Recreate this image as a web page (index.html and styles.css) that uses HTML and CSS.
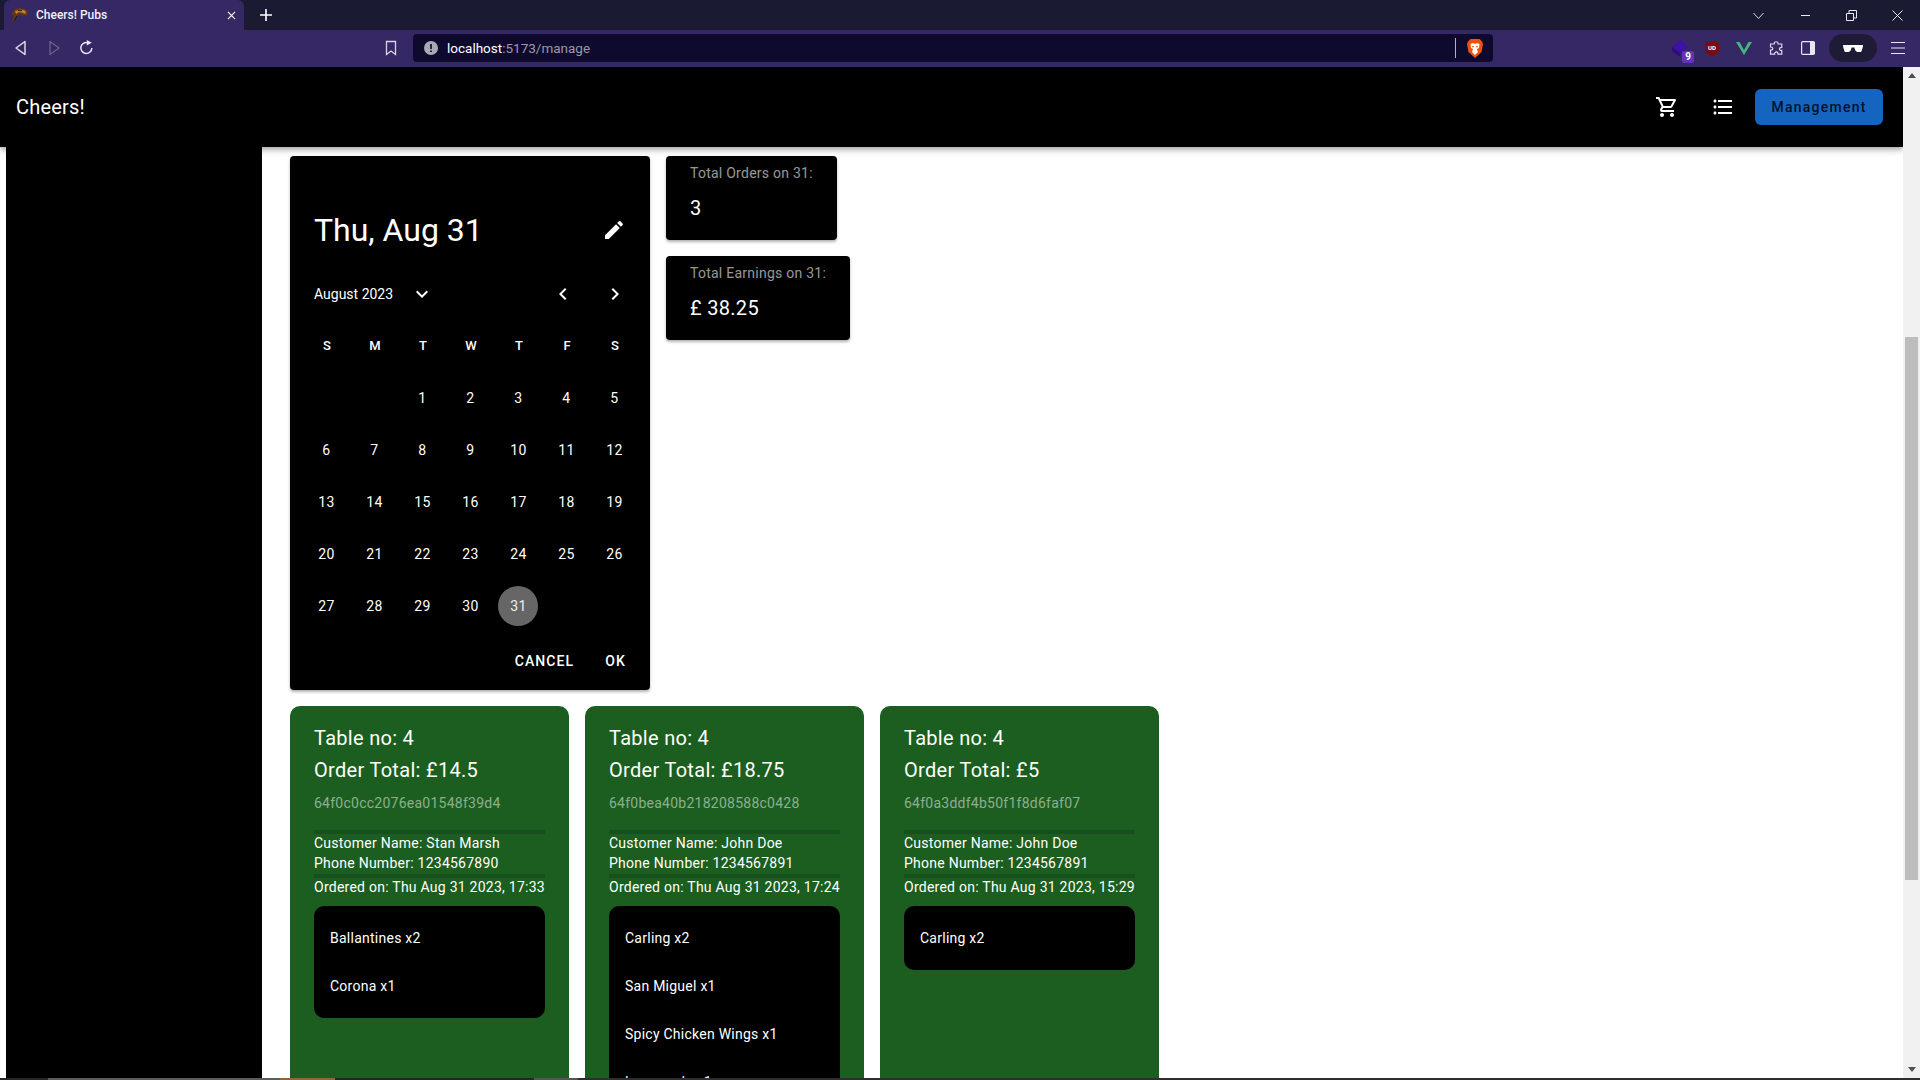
FILE: index.html
```html
<!DOCTYPE html>
<html lang="en">
<head>
<meta charset="utf-8">
<title>Cheers! Pubs</title>
<link rel="stylesheet" href="styles.css">
</head>
<body>
<div class="tabstrip">
  <div class="tab">
    <svg class="favicon" viewBox="0 0 16 14"><path d="M0 5 3 1l5-1 5 1 3 2-1 5-3-1-2 1-2-2-3 2-2 4-2 2-1-1 2-5-2-1z" fill="#5e3a14"/><path d="M3 3 8 1.500l4 .5 2 2-1 2-3-1.500L7 4 4 6z" fill="#c6802a"/><path d="M6 2.500h4M2 13l3-5" stroke="#2c1a08" stroke-width="1.200"/></svg>
    <span class="tab-title">Cheers! Pubs</span>
    <svg class="tab-close" viewBox="0 0 10 10"><path d="M1 1l8 8M9 1 1 9" stroke="#fff" stroke-width="1.300"/></svg>
  </div>
  <svg class="tab-plus" viewBox="0 0 12 12"><path d="M6 0v12M0 6h12" stroke="#fff" stroke-width="1.600"/></svg>
  <div class="winctl">
    <span class="winslot"><svg class="ic-11" viewBox="0 0 11 11"><path d="M.5 3 5.500 8.500 10.500 3" fill="none" stroke="#d8d8e0"/></svg></span>
    <span class="winslot"><svg class="ic-11" viewBox="0 0 11 11"><path d="M1 5.500h9" stroke="#e8e8f0" stroke-width="1"/></svg></span>
    <span class="winslot"><svg class="ic-11" viewBox="0 0 11 11"><path d="M.5 3.500h7v7h-7zM3 3.500V.5h7.500v7.500H8" fill="none" stroke="#e8e8f0"/></svg></span>
    <span class="winslot"><svg class="ic-11" viewBox="0 0 11 11"><path d="M.5.5l10 10M10.500.5l-10 10" stroke="#e8e8f0"/></svg></span>
  </div>
</div>
<div class="toolbar">
  <span class="navslot first"><svg class="ic-16" viewBox="0 0 16 16"><path d="M12 1.500v13L3 8z" fill="none" stroke="#e4e2ee" stroke-width="1.400" stroke-linejoin="round"/></svg></span>
  <span class="navslot"><svg class="ic-16" viewBox="0 0 16 16"><path d="M4 1.500v13L13 8z" fill="none" stroke="#6a5f90" stroke-width="1.400" stroke-linejoin="round"/></svg></span>
  <span class="navslot"><svg class="ic-16" viewBox="0.700 0 16 16"><path d="M13.500 8A5.500 5.500 0 1 1 9.500 2.700" fill="none" stroke="#e8e6f2" stroke-width="1.500"/><path d="M8.500 0v5.500l5-2.700z" fill="#e8e6f2"/></svg></span>
  <span class="navslot bookmark"><svg class="ic-16" viewBox="0 0 16 16"><path d="M3.500 1.500h9v13L8 11l-4.500 3.500z" fill="none" stroke="#d8d6e4" stroke-width="1.300"/></svg></span>
  <div class="address">
    <svg class="info" viewBox="0 0 14 14"><circle cx="7" cy="7" r="7" fill="#a9a8b4"/><path d="M7 3v5M7 9.500v1.600" stroke="#0e0a2e" stroke-width="1.700"/></svg>
    <span class="url"><span class="url-host">localhost</span>:5173/manage</span>
    <i class="addr-sep"></i>
    <svg class="lion" viewBox="0 0 16 19"><path d="M3.500 0h9L15 2.500 16 5l-1.500 8L8 19 1.500 13 0 5l1-2.500z" fill="#f1500f"/><path d="M3.500 5 6 4l2 1 2-1 2.500 1L12 9l-2 1 1 3-3 3-3-3 1-3-2-1z" fill="#fff"/><path d="M5 7h2L6 9zM11 7H9l1 2z" fill="#f1500f"/></svg>
  </div>
  <span class="extslot first-ext"><svg class="ext-gem" viewBox="0 0 16 17"><path d="M8.500 0 16 6.500 8.500 13 1 6.500z" fill="#3f10a8"/><path d="M0 7v4l8.500 6v-3.500z" fill="#2d0b80"/></svg><b class="badge">9</b></span>
  <span class="extslot"><svg class="ext-shield" viewBox="0 0 14 15"><path d="M7 0l7 2v7c0 3-4 5-7 6-3-1-7-3-7-6V2z" fill="#7a0b0e"/></svg><b class="ublock">UD</b></span>
  <span class="extslot"><svg class="ext-vue" viewBox="0 0 16 13"><path d="M0 0h3.500L8 8l4.500-8H16L8 13z" fill="#41b883"/></svg></span>
  <span class="extslot"><svg class="ext-puzzle" viewBox="0 0 20 20"><path d="M7 2.500c0-2 5-2 5 0 0 1 0 1.500 0 1.500h5v4.500c-2 0-3 .5-3 2s1 2.500 3 2v5h-5c0-2-1-3-2-3s-3 1-2.500 3H2v-5.500c2 .5 3-.5 3-2s-1-2-3-2V4h5z" fill="none" stroke="#dcdae6" stroke-width="1.600"/></svg></span>
  <span class="extslot"><svg class="ext-panel" viewBox="0 0 14 14"><rect x=".6" y=".6" width="12.800" height="12.800" rx="1.200" fill="none" stroke="#e8e6f2" stroke-width="1.200"/><rect x="9" y="1" width="5" height="12" fill="#e8e6f2"/></svg></span>
  <span class="pill"><svg class="glasses" viewBox="0 0 22 10"><path d="M0 1h22v2l-1.500 5c-.5 1.500-6 1.500-7-1l-1-3h-3l-1 3c-1 2.500-6.500 2.500-7 1L0 3z" fill="#fff"/></svg></span>
  <span class="menuslot"><svg class="ic-16" viewBox="0 0 16 16"><path d="M1 2.500h14M1 8h14M1 13.500h14" stroke="#e8e6f2" stroke-width="1.200"/></svg></span>
</div>
<div class="viewport">
  <div class="page">
    <header class="appbar">
      <div class="brand">Cheers!</div>
      <div class="appbar-actions">
        <svg class="ic-24 cart" viewBox="0 0 24 24"><path fill="#fff" d="M15.550 13c.75 0 1.410-.41 1.750-1.030l3.580-6.490c.37-.66-.11-1.480-.87-1.480H5.210l-.94-2H1v2h2l3.600 7.590-1.350 2.440C4.520 15.370 5.480 17 7 17h12v-2H7l1.100-2h7.450zM6.160 6h12.150l-2.760 5H8.530L6.160 6zM7 18c-1.100 0-1.990.9-1.990 2S5.900 22 7 22s2-.9 2-2-.9-2-2-2zm10 0c-1.100 0-1.990.9-1.990 2s.89 2 1.990 2 2-.9 2-2-.9-2-2-2z"/></svg>
        <svg class="ic-24 list" viewBox="0 0 24 24"><path fill="#fff" d="M4 10.500c-.83 0-1.500.67-1.500 1.500s.67 1.500 1.500 1.500 1.500-.67 1.500-1.500-.67-1.500-1.500-1.500zm0-6c-.83 0-1.500.67-1.500 1.500S3.170 7.500 4 7.500 5.500 6.830 5.500 6 4.830 4.500 4 4.500zm0 12c-.83 0-1.500.68-1.500 1.500s.68 1.500 1.500 1.500 1.500-.68 1.500-1.500-.67-1.500-1.500-1.500zM7 19h14v-2H7v2zm0-6h14v-2H7v2zm0-8v2h14V5H7z"/></svg>
        <button class="mgmt">Management</button>
      </div>
    </header>
    <div class="body-row">
      <aside class="sidebar"></aside>
      <main class="content">
        <section class="top-row">
          <div class="picker">
            <div class="picker-head">
              <span class="picker-date">Thu, Aug 31</span>
              <svg class="ic-24" viewBox="0 0 24 24"><path fill="#fff" d="M3 17.250V21h3.750L17.810 9.940l-3.750-3.750L3 17.250zM20.710 7.040c.39-.39.39-1.020 0-1.410l-2.340-2.340a.9959.9959 0 0 0-1.410 0l-1.830 1.830 3.750 3.750 1.830-1.830z"/></svg>
            </div>
            <div class="month-row">
              <span class="month-label">August 2023</span>
              <svg class="ic-24 month-caret" viewBox="0 0 24 24"><path fill="#fff" d="M7.410 8.590 12 13.170l4.590-4.580L18 10l-6 6-6-6 1.410-1.410z"/></svg>
              <svg class="ic-24 month-prev" viewBox="0 0 24 24"><path fill="#fff" d="M15.410 16.590 10.830 12l4.580-4.590L14 6l-6 6 6 6 1.410-1.410z"/></svg>
              <svg class="ic-24 month-next" viewBox="0 0 24 24"><path fill="#fff" d="M8.590 16.590 13.170 12 8.590 7.410 10 6l6 6-6 6-1.410-1.410z"/></svg>
            </div>
            <div class="weekdays"><span>S</span><span>M</span><span>T</span><span>W</span><span>T</span><span>F</span><span>S</span></div>
            <div class="days">
              <span></span><span></span><span>1</span><span>2</span><span>3</span><span>4</span><span>5</span>
              <span>6</span><span>7</span><span>8</span><span>9</span><span>10</span><span>11</span><span>12</span>
              <span>13</span><span>14</span><span>15</span><span>16</span><span>17</span><span>18</span><span>19</span>
              <span>20</span><span>21</span><span>22</span><span>23</span><span>24</span><span>25</span><span>26</span>
              <span>27</span><span>28</span><span>29</span><span>30</span><span class="selected">31</span>
            </div>
            <div class="picker-actions"><span>CANCEL</span><span>OK</span></div>
          </div>
          <div class="stats">
            <div class="stat">
              <div class="stat-label">Total Orders on 31:</div>
              <div class="stat-value">3</div>
            </div>
            <div class="stat">
              <div class="stat-label">Total Earnings on 31:</div>
              <div class="stat-value">£ 38.25</div>
            </div>
          </div>
        </section>
        <section class="orders">
          <article class="order">
            <div class="order-title">Table no: 4</div>
            <div class="order-title">Order Total: £14.5</div>
            <div class="order-id">64f0c0cc2076ea01548f39d4</div>
            <hr class="rule rule-a">
            <div class="order-line">Customer Name: Stan Marsh</div>
            <div class="order-line">Phone Number: 1234567890</div>
            <hr class="rule">
            <div class="order-line">Ordered on: Thu Aug 31 2023, 17:33</div>
            <ul class="items"><li>Ballantines x2</li><li>Corona x1</li></ul>
          </article>
          <article class="order">
            <div class="order-title">Table no: 4</div>
            <div class="order-title">Order Total: £18.75</div>
            <div class="order-id">64f0bea40b218208588c0428</div>
            <hr class="rule rule-a">
            <div class="order-line">Customer Name: John Doe</div>
            <div class="order-line">Phone Number: 1234567891</div>
            <hr class="rule">
            <div class="order-line">Ordered on: Thu Aug 31 2023, 17:24</div>
            <ul class="items"><li>Carling x2</li><li>San Miguel x1</li><li>Spicy Chicken Wings x1</li><li>Lemonade x1</li></ul>
          </article>
          <article class="order">
            <div class="order-title">Table no: 4</div>
            <div class="order-title">Order Total: £5</div>
            <div class="order-id">64f0a3ddf4b50f1f8d6faf07</div>
            <hr class="rule rule-a">
            <div class="order-line">Customer Name: John Doe</div>
            <div class="order-line">Phone Number: 1234567891</div>
            <hr class="rule">
            <div class="order-line">Ordered on: Thu Aug 31 2023, 15:29</div>
            <ul class="items"><li>Carling x2</li></ul>
          </article>
        </section>
      </main>
    </div>
  </div>
  <div class="scrollbar">
    <i class="arrow-up"></i>
    <div class="track"><div class="thumb"></div></div>
    <i class="arrow-down"></i>
  </div>
</div>
<div class="taskstrip"></div>
</body>
</html>
```
FILE: styles.css
```css
* { box-sizing: border-box; }
html, body { margin: 0; height: 100%; overflow: hidden; }
body { display: flex; flex-direction: column; height: 1080px; font-family: Roboto, "Liberation Sans", sans-serif; background: #fff; color: #fff; }

/* browser chrome */
.tabstrip { height: 30px; flex: none; background: #1b1a33; display: flex; align-items: center; }
.tab { margin-left: 4px; width: 240px; height: 30px; background: #352864; border-radius: 6px 6px 0 0; display: flex; align-items: center; padding-left: 8px; }
.favicon { width: 16px; height: 14px; flex: none; }
.tab-title { margin-left: 8px; font: 500 12px/30px Roboto, sans-serif; color: #f0eef8; flex: 1; }
.tab-close { width: 9px; height: 9px; margin-right: 8px; }
.tab-plus { width: 12px; height: 12px; margin-left: 16px; }
.winctl { margin-left: auto; margin-right: -1px; display: flex; }
.winslot { width: 46.400px; display: flex; justify-content: center; align-items: center; height: 28px; }
.ic-11 { width: 11px; height: 11px; }
.toolbar { height: 37px; flex: none; background: #352864; display: flex; align-items: center; padding-bottom: 1px; }
.navslot { width: 33px; display: flex; justify-content: center; }
.navslot.first { margin-left: 4.500px; }
.navslot.bookmark { margin-left: 271px; }
.ic-16 { width: 16px; height: 16px; display: block; }
.address { margin-left: 5.500px; width: 1080px; height: 28px; background: #0e0a2e; border-radius: 4px; display: flex; align-items: center; padding-left: 11px; }
.info { width: 14px; height: 14px; flex: none; }
.url { margin-left: 9px; font: 400 13.500px Roboto, sans-serif; color: #9a98a8; }
.url-host { color: #fff; }
.addr-sep { margin-left: auto; width: 1px; height: 20px; background: #b4b2c0; }
.lion { width: 16px; height: 19px; margin: 0 10px 0 11px; flex: none; }
.extslot { width: 32px; height: 28px; position: relative; display: flex; justify-content: center; align-items: center; }
.extslot.first-ext { margin-left: 171px; }
.ext-gem { width: 16px; height: 17px; }
.ext-shield { width: 14px; height: 15px; }
.ext-vue { width: 16px; height: 13px; }
.ext-puzzle { width: 15px; height: 15px; }
.ext-panel { width: 14px; height: 14px; }
.badge { position: absolute; left: 18px; top: 17px; width: 12px; height: 12px; background: #6334b8; border-radius: 2px; font: 700 10px/12px Roboto, sans-serif; text-align: center; color: #fff; }
.ublock { position: absolute; inset: 0; font: 700 6px/27px Roboto, sans-serif; text-align: center; color: #fff; }
.pill { margin-left: 5px; width: 48px; height: 28px; border-radius: 14px; background: #1e1b36; display: flex; justify-content: center; align-items: center; }
.glasses { width: 20px; height: 9px; }
.menuslot { width: 42px; display: flex; justify-content: center; }

/* page */
.viewport { flex: 1; min-height: 0; display: flex; }
.page { flex: 1; min-width: 0; display: flex; flex-direction: column; overflow: hidden; }
.appbar { height: 80px; flex: none; background: #000; display: flex; align-items: center; justify-content: space-between; padding: 0 20px 0 16px; box-shadow: 0 2px 4px -1px rgba(0,0,0,.2), 0 4px 5px rgba(0,0,0,.14), 0 1px 10px rgba(0,0,0,.12); position: relative; z-index: 2; }
.brand { font: 400 20px/32px Roboto, sans-serif; letter-spacing: .2px; color: #fff; }
.appbar-actions { display: flex; align-items: center; }
.ic-24 { width: 24px; height: 24px; display: block; flex: none; }
.list { margin-left: 32px; }
.mgmt { margin-left: 20px; width: 128px; height: 36px; border: 0; border-radius: 6px; background: #1565c0; color: #04122a; font: 500 14px/36px Roboto, sans-serif; letter-spacing: 1.250px; padding: 0; box-shadow: 0 1px 3px rgba(0,0,0,.3); }
.body-row { flex: 1; min-height: 0; display: flex; padding-left: 6px; }
.sidebar { width: 256px; flex: none; background: #000; }
.content { flex: 1; min-width: 0; padding: 9px 0 0 28px; display: flex; flex-direction: column; gap: 16px; overflow: hidden; }

/* date picker */
.top-row { display: flex; gap: 16px; align-items: flex-start; flex: none; }
.picker { width: 360px; height: 534px; flex: none; background: #000; border-radius: 4px; box-shadow: 0 2px 3px rgba(0,0,0,.3); padding: 0 12px; }
.picker-head { display: flex; justify-content: space-between; align-items: center; height: 48px; margin-top: 50px; padding: 0 12px; }
.picker-date { font: 400 32px/48px Roboto, sans-serif; }
.month-row { display: flex; align-items: center; height: 40px; margin-top: 19.500px; padding-left: 12px; }
.month-label { font: 400 14px/24px Roboto, sans-serif; width: 96px; }
.month-prev { margin-left: 117px; }
.month-next { margin-left: 28px; }
.weekdays, .days { display: grid; grid-template-columns: repeat(7, 48px); justify-items: center; align-items: center; }
.weekdays { height: 40px; margin-top: 12px; padding-left: 1px; font: 500 13px/40px Roboto, sans-serif; }
.days { grid-auto-rows: 52px; margin-top: 6px; font: 400 14px/40px Roboto, sans-serif; letter-spacing: .5px; }
.days span { width: 40px; height: 40px; text-align: center; border-radius: 50%; padding-left: 1px; }
.days .selected { background: #666; color: #eee; }
.picker-actions { display: flex; justify-content: flex-end; gap: 31px; padding-right: 12px; margin-top: 17.500px; font: 500 14px/24px Roboto, sans-serif; letter-spacing: 1.100px; }

/* stats */
.stats { display: flex; flex-direction: column; gap: 16px; align-items: flex-start; }
.stat { height: 84px; background: #000; border-radius: 4px; padding: 7px 24px 0; box-shadow: 0 2px 3px rgba(0,0,0,.3); }
.stat-label { font: 400 14px/20px Roboto, sans-serif; letter-spacing: .25px; color: rgba(255,255,255,.6); }
.stat-value { font: 400 20px/32px Roboto, sans-serif; letter-spacing: .3px; margin-top: 9px; }

/* orders */
.orders { display: flex; gap: 16px; flex: none; }
.order { width: 279px; height: 500px; background: #1b5e20; border-radius: 10px; padding: 16px 24px 0; }
.order-title { font: 400 20px/32px Roboto, sans-serif; letter-spacing: .3px; }
.order-id { font: 400 14px/20px Roboto, sans-serif; letter-spacing: .25px; color: rgba(255,255,255,.5); margin-top: 7px; }
.rule { height: 4px; border: 0; margin: 0; background: #17501c; }
.rule-a { margin-top: 17px; }
.order-line { font: 400 14px/20px Roboto, sans-serif; letter-spacing: .25px; white-space: nowrap; }
.rule + .order-line { margin-top: -1px; }
.order-line + .rule { margin-top: 1px; }
.items { list-style: none; margin: 9px 0 0; padding: 8px 16px; background: #000; border-radius: 10px; }
.items li { font: 400 14px/48px Roboto, sans-serif; letter-spacing: .25px; }

/* scrollbar */
.scrollbar { width: 17px; flex: none; background: #f1f1f1; display: flex; flex-direction: column; align-items: center; padding: 6px 0; }
.arrow-up { width: 0; height: 0; border: 4.500px solid transparent; border-top: 0; border-bottom: 5px solid #505050; }
.arrow-down { width: 0; height: 0; border: 4.500px solid transparent; border-bottom: 0; border-top: 5px solid #505050; }
.track { flex: 1; width: 13px; }
.thumb { width: 13px; height: 543px; margin-top: 259px; background: #bdbdbd; }

/* bottom edge */
.taskstrip { height: 2px; flex: none; background: linear-gradient(90deg, #262626 0 48px, #5c5c5c 48px 280px, #8a6a3a 280px 335px, #262626 335px 534px, #555 534px 578px, #2e2e2e 578px); }
```
